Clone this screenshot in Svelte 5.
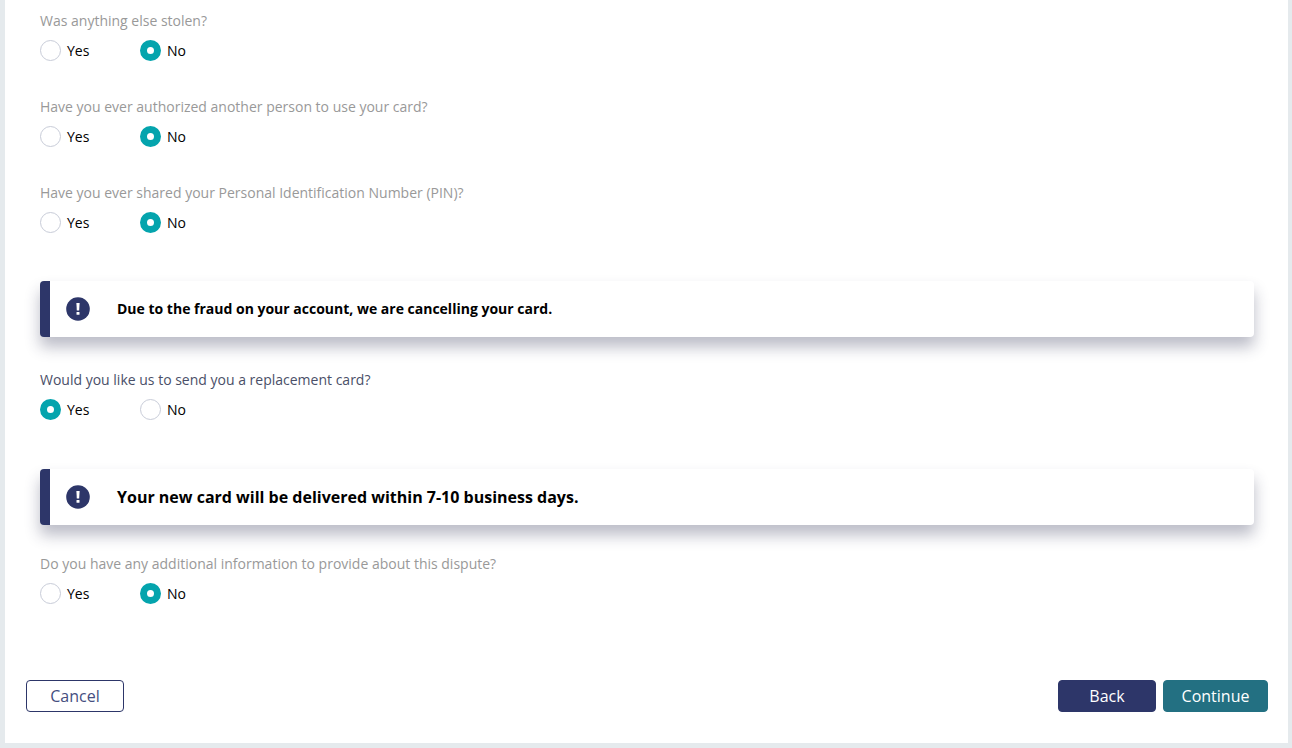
<script lang="ts">
  type Answer = 'Yes' | 'No';

  interface Question {
    id: string;
    text: string;
    active?: boolean;
  }

  const options: Answer[] = ['Yes', 'No'];

  const history: Question[] = [
    { id: 'stolen', text: 'Was anything else stolen?' },
    { id: 'authorized', text: 'Have you ever authorized another person to use your card?' },
    { id: 'pin', text: 'Have you ever shared your Personal Identification Number (PIN)?' }
  ];

  const replacement: Question = {
    id: 'replacement',
    text: 'Would you like us to send you a replacement card?',
    active: true
  };

  const additional: Question = {
    id: 'additional',
    text: 'Do you have any additional information to provide about this dispute?'
  };

  let answers = $state<Record<string, Answer>>({
    stolen: 'No',
    authorized: 'No',
    pin: 'No',
    replacement: 'Yes',
    additional: 'No'
  });
</script>

{#snippet radioGroup(question: Question)}
  <fieldset class="question">
    <legend class:active={question.active}>{question.text}</legend>
    <div class="options">
      {#each options as option}
        <label class="option">
          <input type="radio" name={question.id} value={option} bind:group={answers[question.id]} />
          <span>{option}</span>
        </label>
      {/each}
    </div>
  </fieldset>
{/snippet}

{#snippet notice(text: string, large: boolean)}
  <div class="notice" class:large role="status">
    <svg class="notice-icon" viewBox="0 0 24 24" aria-hidden="true">
      <circle cx="12" cy="12" r="11.8" fill="#2d3669" />
      <path d="M10.4 6h3.2l-.4 7.4h-2.4z" fill="#fff" />
      <rect x="10.5" y="15" width="3" height="2.8" rx="0.5" fill="#fff" />
    </svg>
    <p>{text}</p>
  </div>
{/snippet}

<main class="page">
  <form class="panel" onsubmit={(e) => e.preventDefault()}>
    <div class="content">
      <div class="history">
        {#each history as question (question.id)}
          {@render radioGroup(question)}
        {/each}
      </div>
      {@render notice('Due to the fraud on your account, we are cancelling your card.', false)}
      {@render radioGroup(replacement)}
      {@render notice('Your new card will be delivered within 7-10 business days.', true)}
      {@render radioGroup(additional)}
    </div>

    <footer class="actions">
      <button type="button" class="button cancel">Cancel</button>
      <div class="nav">
        <button type="button" class="button back">Back</button>
        <button type="submit" class="button continue">Continue</button>
      </div>
    </footer>
  </form>
</main>

<style>
  :global(body) {
    margin: 0;
    background: #e5eaed;
  }

  .page {
    padding: 0 4px 5px 5px;
    font-family: 'Open Sans', 'Liberation Sans', sans-serif;
    font-size: 14px;
    line-height: 20px;
    color: #000;
  }

  .panel {
    background: #fff;
    padding: 11px 20px 31px 21px;
  }

  .content {
    padding: 0 14px;
  }

  .history {
    display: flex;
    flex-direction: column;
    gap: 36px;
  }

  .question {
    min-width: 0;
    margin: 0;
    padding: 0;
    border: 0;
  }

  legend {
    padding: 0;
    margin-bottom: 9px;
    color: #999;
  }

  legend.active {
    color: #4a4f68;
  }

  .options {
    display: flex;
  }

  .option {
    display: flex;
    align-items: center;
    gap: 6px;
    min-width: 100px;
    height: 21px;
    cursor: pointer;
  }

  .option input {
    appearance: none;
    box-sizing: border-box;
    width: 21px;
    height: 21px;
    margin: 0;
    border: 1px solid #c8ccd8;
    border-radius: 50%;
    background: #fff;
    cursor: pointer;
  }

  .option input:checked {
    border: 7px solid #04a4ad;
  }

  .notice {
    display: flex;
    align-items: center;
    box-sizing: border-box;
    min-height: 56px;
    margin: 48px 0 33px;
    padding: 0 16px;
    border-left: 10px solid #2d3669;
    border-radius: 4px;
    background: #fff;
    box-shadow: 0 10px 15px rgba(45, 48, 80, 0.32);
  }

  .notice-icon {
    flex: none;
    width: 24px;
    height: 24px;
    margin-right: 27px;
  }

  .notice p {
    margin: 0;
    font-weight: 700;
  }

  .notice.large {
    margin: 49px 0 29px;
  }

  .notice.large p {
    font-size: 16px;
  }

  .actions {
    display: flex;
    justify-content: space-between;
    margin-top: 76px;
  }

  .nav {
    display: flex;
    gap: 7px;
  }

  .button {
    box-sizing: border-box;
    min-width: 98px;
    height: 32px;
    padding: 0 16px;
    border: 1px solid transparent;
    border-radius: 4px;
    font-family: inherit;
    font-size: 16px;
    line-height: 20px;
    color: #fff;
    cursor: pointer;
  }

  .cancel {
    border-color: #2d3669;
    background: #fff;
    color: #454e80;
  }

  .back {
    background: #2d3669;
    border-color: #2d3669;
  }

  .continue {
    min-width: 105px;
    background: #237082;
    border-color: #237082;
  }
</style>
